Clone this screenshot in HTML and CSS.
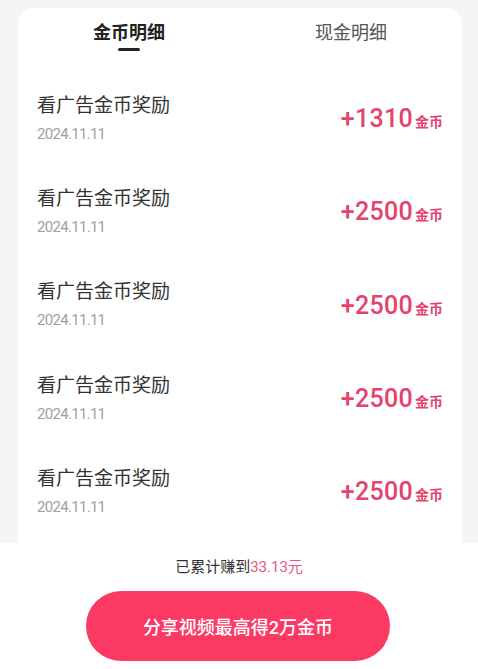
FILE: index.html
```html
<!DOCTYPE html>
<html lang="zh-CN">
<head>
  <meta charset="UTF-8">
  <title>金币明细</title>
  <link rel="stylesheet" href="styles.css">
</head>
<body>
  <div class="page">
    <!-- Records card -->
    <div class="main">
      <div class="card">
        <div class="tabs">
          <div class="tab active">
            <span class="tab-label">金币明细</span>
            <span class="tab-line"></span>
          </div>
          <div class="tab">
            <span class="tab-label">现金明细</span>
          </div>
        </div>

        <div class="list">
          <div class="row">
            <div class="info">
              <div class="title">看广告金币奖励</div>
              <div class="date">2024.11.11</div>
            </div>
            <div class="amount">+1310<span class="unit">金币</span></div>
          </div>
          <div class="row">
            <div class="info">
              <div class="title">看广告金币奖励</div>
              <div class="date">2024.11.11</div>
            </div>
            <div class="amount">+2500<span class="unit">金币</span></div>
          </div>
          <div class="row">
            <div class="info">
              <div class="title">看广告金币奖励</div>
              <div class="date">2024.11.11</div>
            </div>
            <div class="amount">+2500<span class="unit">金币</span></div>
          </div>
          <div class="row">
            <div class="info">
              <div class="title">看广告金币奖励</div>
              <div class="date">2024.11.11</div>
            </div>
            <div class="amount">+2500<span class="unit">金币</span></div>
          </div>
          <div class="row">
            <div class="info">
              <div class="title">看广告金币奖励</div>
              <div class="date">2024.11.11</div>
            </div>
            <div class="amount">+2500<span class="unit">金币</span></div>
          </div>
        </div>
      </div>
    </div>

    <!-- Bottom bar -->
    <div class="footer">
      <div class="total">已累计赚到<span class="total-num">33.13元</span></div>
      <button class="share-btn">分享视频最高得2万金币</button>
    </div>
  </div>
</body>
</html>
```

FILE: styles.css
```css
html, body {
  margin: 0;
  height: 100%;
}

body {
  background: #f5f5f5;
  font-family: Roboto, "Noto Sans CJK SC", sans-serif;
  color: #333;
}

.page {
  height: 669px;
  display: flex;
  flex-direction: column;
}

.main {
  flex: 1;
  overflow: hidden;
  padding: 8px 16px 0 18px;
  display: flex;
  flex-direction: column;
}

.card {
  flex: 1;
  background: #fff;
  border-radius: 16px 16px 0 0;
}

/* Tabs */
.tabs {
  display: flex;
  padding-top: 12px;
  height: 39px;
}

.tab {
  flex: 1;
  display: flex;
  flex-direction: column;
  align-items: center;
}

.tab-label {
  font-size: 18px;
  line-height: 26px;
  color: #555;
}

.tab.active .tab-label {
  color: #222;
  font-weight: bold;
}

.tab-line {
  width: 22px;
  height: 3px;
  margin-top: 2px;
  background: #222;
  border-radius: 2px;
}

/* Record rows */
.list {
  padding-top: 13px;
}

.row {
  height: 93.3px;
  display: flex;
  align-items: center;
  justify-content: space-between;
  padding: 0 19px;
}

.title {
  font-size: 19px;
  line-height: 24px;
  color: #333;
}

.date {
  margin-top: 6px;
  font-size: 15px;
  line-height: 20px;
  letter-spacing: -0.7px;
  color: #a0a0a0;
}

.amount {
  color: #e5426e;
  font-size: 25px;
  font-weight: 500;
  letter-spacing: 0.3px;
  display: flex;
  align-items: baseline;
}

.unit {
  font-size: 14px;
  font-weight: bold;
  letter-spacing: 0;
  margin-left: 2px;
}

/* Footer */
.footer {
  height: 126px;
  background: #fff;
  display: flex;
  flex-direction: column;
  align-items: center;
}

.total {
  margin-top: 14px;
  font-size: 15px;
  line-height: 20px;
  color: #333;
}

.total-num {
  color: #e8557c;
}

.share-btn {
  margin-top: 14px;
  width: 304px;
  height: 70px;
  border: none;
  border-radius: 35px;
  background: #fa3a63;
  color: #fff;
  font-family: Roboto, "Noto Sans CJK SC", sans-serif;
  font-size: 18px;
  font-weight: 500;
  margin-left: -2px;
}
```
